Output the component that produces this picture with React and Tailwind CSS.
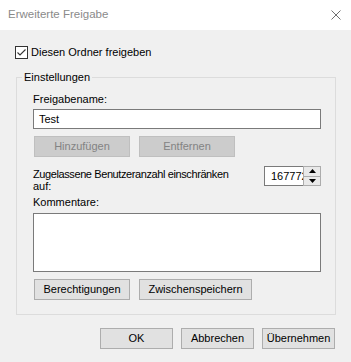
import React from 'react';

const Btn = ({ children, disabled, className = '' }) => (
  <div
    className={
      'h-[21px] flex items-center justify-center border leading-none ' +
      (disabled
        ? 'bg-[#cccccc] border-[#bfbfbf] text-[#838383] '
        : 'bg-[#e1e1e1] border-[#adadad] text-black ') +
      className
    }
  >
    {children}
  </div>
);

export default function App() {
  return (
    <div className="w-[351px] h-[362px] bg-[#f0f0f0] flex flex-col overflow-hidden font-['Liberation_Sans',Arial,sans-serif] text-[11px] text-black">
      {/* title bar */}
      <div className="h-[30px] shrink-0 bg-white flex items-center justify-between pl-[8px] pr-[10px]">
        <span className="text-[#8a8a8a] text-[11.5px]">Erweiterte Freigabe</span>
        <svg width="10" height="10" viewBox="0 0 10 10">
          <path d="M0.5 0.5 L9.5 9.5 M9.5 0.5 L0.5 9.5" stroke="#707070" strokeWidth="1" fill="none" />
        </svg>
      </div>

      <div className="pl-[16px] pr-[15px]">
        <div className="flex items-center gap-[3px] mt-[16px] -ml-[1px] h-[13px]">
          <span className="w-[13px] h-[13px] shrink-0 border border-[#333333] bg-white flex items-center justify-center">
            <svg width="11" height="11" viewBox="0 0 11 11">
              <polyline points="1.5,5.5 4,8 9.5,2.5" stroke="#333333" strokeWidth="1.1" fill="none" />
            </svg>
          </span>
          <span className="leading-[15px]">Diesen Ordner freigeben</span>
        </div>

        {/* Einstellungen group */}
        <div className="relative mt-[18px] w-[320px] h-[238px] border border-[#dcdcdc] pl-[16px]">
          <span className="absolute -top-[8px] left-[5px] px-[2px] bg-[#f0f0f0] leading-[15px]">Einstellungen</span>

          <div className="mt-[14px] leading-[15px]">Freigabename:</div>
          <div className="mt-[2px] w-[288px] h-[20px] border border-[#7a7a7a] bg-white flex items-center pl-[5px]">
            Test
          </div>

          <div className="mt-[7px] flex gap-[9px] pl-[1px]">
            <Btn disabled className="w-[96px]">Hinzufügen</Btn>
            <Btn disabled className="w-[96px]">Entfernen</Btn>
          </div>

          <div className="mt-[9px] w-[288px] flex items-start justify-between">
            <div className="mt-[2px] leading-[12px]">
              <span className="tracking-[-0.4px]">Zugelassene Benutzeranzahl einschränken</span>
              <br />
              auf:
            </div>
            <div className="flex h-[20px] shrink-0">
              <div className="w-[39px] border-y border-l border-[#7a7a7a] bg-white overflow-hidden whitespace-nowrap pl-[6px] flex items-center">
                16777216
              </div>
              <div className="w-[18px] border border-[#acacac] bg-[#e9e9e9] flex flex-col">
                <div className="flex-1 flex items-center justify-center border-b border-[#acacac]">
                  <svg width="7" height="4" viewBox="0 0 7 4">
                    <path d="M0 4 L3.5 0 L7 4 Z" fill="#000" />
                  </svg>
                </div>
                <div className="flex-1 flex items-center justify-center">
                  <svg width="7" height="4" viewBox="0 0 7 4">
                    <path d="M0 0 L3.5 4 L7 0 Z" fill="#000" />
                  </svg>
                </div>
              </div>
            </div>
          </div>

          <div className="mt-[3px] leading-[15px]">Kommentare:</div>
          <div className="mt-[3px] w-[288px] h-[59px] border border-[#7a7a7a] bg-white" />

          <div className="mt-[7px] flex gap-[9px] pl-[1px]">
            <Btn className="w-[96px]">Berechtigungen</Btn>
            <Btn className="w-[113px]">Zwischenspeichern</Btn>
          </div>
        </div>

        <div className="mt-[13px] mr-[1px] flex justify-end gap-[8px]">
          <Btn className="w-[73px]">OK</Btn>
          <Btn className="w-[73px]">Abbrechen</Btn>
          <Btn className="w-[73px]">Übernehmen</Btn>
        </div>
      </div>
    </div>
  );
}
